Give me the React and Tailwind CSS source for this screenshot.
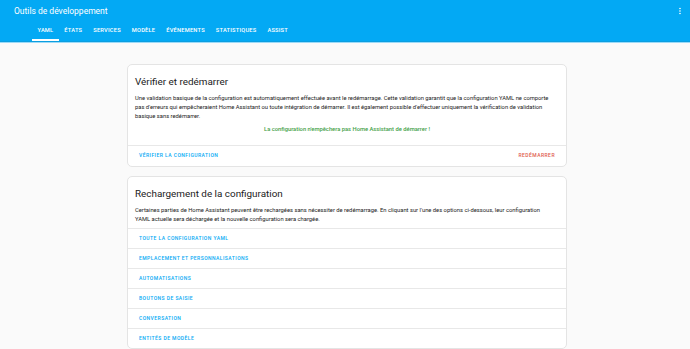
import React from "react";

const tabs = ["YAML", "ÉTATS", "SERVICES", "MODÈLE", "ÉVÉNEMENTS", "STATISTIQUES", "ASSIST"];
const rows = [
  "TOUTE LA CONFIGURATION YAML",
  "EMPLACEMENT ET PERSONNALISATIONS",
  "AUTOMATISATIONS",
  "BOUTONS DE SAISIE",
  "CONVERSATION",
  "ENTITÉS DE MODÈLE",
];

export default function App() {
  return (
    <div className="w-[690px] h-[349px] overflow-hidden bg-[#fafafa] font-['Roboto',sans-serif]">
      <header className="bg-[#03a9f4] text-white">
        <div className="h-[22px] flex items-center justify-between pl-[14px] pr-[5px]">
          <span className="text-[8.5px] leading-none">Outils de développement</span>
          <svg width="10" height="10" viewBox="0 0 24 24" fill="white">
            <path d="M12,16A2,2 0 0,1 14,18A2,2 0 0,1 12,20A2,2 0 0,1 10,18A2,2 0 0,1 12,16M12,10A2,2 0 0,1 14,12A2,2 0 0,1 12,14A2,2 0 0,1 10,12A2,2 0 0,1 12,10M12,4A2,2 0 0,1 14,6A2,2 0 0,1 12,8A2,2 0 0,1 10,6A2,2 0 0,1 12,4Z" />
          </svg>
        </div>
        <nav className="h-[19px] flex pl-[32px]">
          {tabs.map((t, i) => (
            <div
              key={t}
              className={
                "h-full flex items-center px-[5.5px] text-[5.7px] font-medium tracking-[0.22px] border-b-2 " +
                (i === 0 ? "border-white" : "border-transparent")
              }
            >
              {t}
            </div>
          ))}
        </nav>
      </header>
      <div className="h-px bg-[#0b9ee0]" />
      <div className="h-px bg-[#9bdaf8]" />
      <main className="flex flex-col items-center pl-[4px] pt-[21px] gap-[9px]">
        <section className="w-[440px] bg-white border border-[#e4e4e4] rounded-[5px]">
          <div className="px-[7px] pt-[11px]">
            <h2 className="text-[9.9px] leading-[12px] text-[#212121]">Vérifier et redémarrer</h2>
            <p className="mt-[6px] text-[5.8px] leading-[9px] text-[#212121]">
              Une validation basique de la configuration est automatiquement effectuée avant le redémarrage. Cette validation garantit que la configuration YAML ne comporte pas d'erreurs qui empêcheraient Home Assistant ou toute intégration de démarrer. Il est également possible d'effectuer uniquement la vérification de validation basique sans redémarrer.
            </p>
            <p className="mt-[4px] mb-[11px] text-center text-[5.8px] leading-[9px] font-medium text-[#43a047]">
              La configuration n'empêchera pas Home Assistant de démarrer !
            </p>
          </div>
          <div className="h-[21px] border-t border-[#e8e8e8] flex items-center justify-between px-[11px] text-[5px] font-medium tracking-[0.45px]">
            <span className="text-[#03a9f4]">VÉRIFIER LA CONFIGURATION</span>
            <span className="text-[#e05a4e]">REDÉMARRER</span>
          </div>
        </section>
        <section className="w-[440px] bg-white border border-[#e4e4e4] rounded-[5px]">
          <div className="px-[7px] pt-[11px] pb-[4px]">
            <h2 className="text-[9.9px] leading-[12px] text-[#212121]">Rechargement de la configuration</h2>
            <p className="mt-[6px] text-[5.8px] leading-[9px] text-[#212121]">
              Certaines parties de Home Assistant peuvent être rechargées sans nécessiter de redémarrage. En cliquant sur l'une des options ci-dessous, leur configuration
              <br />
              YAML actuelle sera déchargée et la nouvelle configuration sera chargée.
            </p>
          </div>
          {rows.map((r) => (
            <div
              key={r}
              className="h-[20px] border-t border-[#e8e8e8] flex items-center px-[11px] text-[5px] font-medium tracking-[0.45px] text-[#03a9f4]"
            >
              {r}
            </div>
          ))}
        </section>
      </main>
    </div>
  );
}
